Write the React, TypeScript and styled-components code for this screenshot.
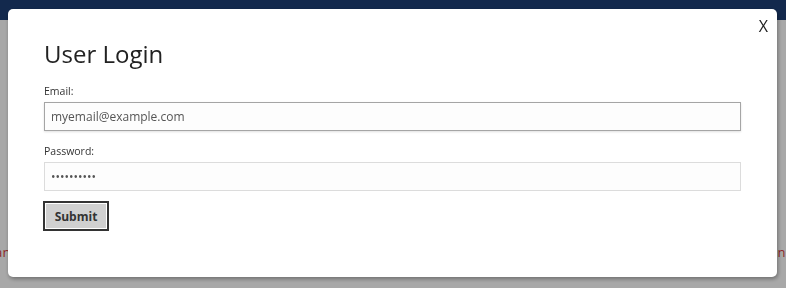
import styled, { createGlobalStyle } from 'styled-components';

const GlobalStyle = createGlobalStyle`
  html, body {
    margin: 0;
    padding: 0;
    background: #ffffff;
    font-family: "Open Sans", "Liberation Sans", sans-serif;
  }
`;

const Page = styled.div`
  width: 786px;
  height: 288px;
  overflow: hidden;
  display: flex;
  flex-direction: column;
`;

const TopBar = styled.header`
  height: 20px;
  background: #1d3f76;
`;

const PageBody = styled.main`
  flex: 1;
  display: flex;
  flex-direction: column;
  align-items: center;
  padding-top: 223px;
`;

const Notice = styled.p`
  margin: 0;
  white-space: nowrap;
  font-size: 13px;
  line-height: 18px;
  color: #d84040;
  letter-spacing: 0.2px;
`;

const Overlay = styled.div`
  position: fixed;
  inset: 0;
  background: rgba(0, 0, 0, 0.34);
  display: flex;
  align-items: flex-start;
  padding: 9px 10px 0 8px;
`;

const Modal = styled.div`
  position: relative;
  flex: 1;
  height: 268px;
  box-sizing: border-box;
  background: #ffffff;
  border-radius: 5px;
  box-shadow: 1px 2px 4px rgba(0, 0, 0, 0.35);
  padding: 27px 36px 0 36px;
`;

const CloseButton = styled.button`
  position: absolute;
  top: 6px;
  right: 9px;
  border: none;
  background: none;
  padding: 0;
  font-family: "Open Sans", "Liberation Sans", sans-serif;
  font-size: 16px;
  color: #222;
  cursor: pointer;
`;

const Title = styled.h2`
  margin: 0 0 12px 0;
  font-size: 24px;
  font-weight: 400;
  line-height: 36px;
  color: #222;
`;

const Form = styled.form`
  display: flex;
  flex-direction: column;
`;

const Field = styled.div`
  display: flex;
  flex-direction: column;

  & + & {
    margin-top: 13px;
  }
`;

const Label = styled.label`
  font-size: 10.5px;
  line-height: 15px;
  color: #333;
  margin-bottom: 3px;
`;

const Input = styled.input<{ $active?: boolean }>`
  box-sizing: border-box;
  width: 697px;
  height: 29px;
  padding: 0 6px;
  font-family: "Open Sans", "Liberation Sans", sans-serif;
  font-size: 12px;
  color: #555;
  background: #fdfdfd;
  border: 1px solid ${(p) => (p.$active ? '#a5a5a5' : '#dcdcdc')};
  box-shadow: ${(p) => (p.$active ? '0 1px 2px rgba(0,0,0,0.12)' : 'none')};
  outline: none;
  border-radius: 0;
`;

const SubmitButton = styled.button`
  align-self: flex-start;
  margin-top: 10px;
  margin-left: -1px;
  width: 66px;
  height: 30px;
  box-sizing: border-box;
  background: #d0d0d0;
  border: 2px solid #333;
  box-shadow: inset 0 0 0 1px #ffffff;
  font-family: "Open Sans", "Liberation Sans", sans-serif;
  font-size: 12px;
  font-weight: 700;
  color: #333;
  padding: 0;
`;

export default function App() {
  return (
    <>
      <GlobalStyle />
      <Page>
        <TopBar />
        <PageBody>
          <Notice>
            Important information about your account: an upcoming maintenance window will affect this service, please read it before you continue here
          </Notice>
        </PageBody>
      </Page>
      <Overlay>
        <Modal>
          <CloseButton type="button">X</CloseButton>
          <Title>User Login</Title>
          <Form onSubmit={(e) => e.preventDefault()}>
            <Field>
              <Label htmlFor="email">Email:</Label>
              <Input id="email" type="text" $active defaultValue="myemail@example.com" />
            </Field>
            <Field>
              <Label htmlFor="password">Password:</Label>
              <Input id="password" type="password" defaultValue="mypassword" />
            </Field>
            <SubmitButton type="submit">Submit</SubmitButton>
          </Form>
        </Modal>
      </Overlay>
    </>
  );
}
